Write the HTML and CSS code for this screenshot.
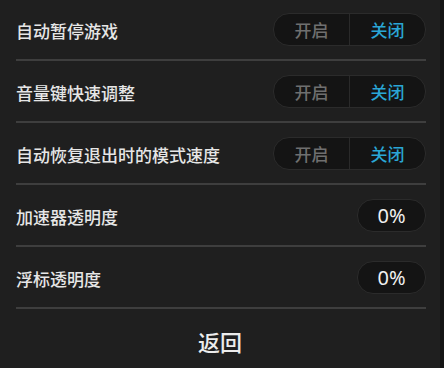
FILE: index.html
```html
<!DOCTYPE html>
<html>
<head>
<meta charset="utf-8">
<link rel="stylesheet" href="styles.css">
</head>
<body>
<div class="page">
  <div class="list">
    <div class="row first">
      <span class="label">自动暂停游戏</span>
      <div class="toggle"><span class="opt">开启</span><span class="opt on">关闭</span></div>
    </div>
    <div class="row">
      <span class="label">音量键快速调整</span>
      <div class="toggle"><span class="opt">开启</span><span class="opt on">关闭</span></div>
    </div>
    <div class="row">
      <span class="label">自动恢复退出时的模式速度</span>
      <div class="toggle"><span class="opt">开启</span><span class="opt on">关闭</span></div>
    </div>
    <div class="row">
      <span class="label">加速器透明度</span>
      <div class="pill">0%</div>
    </div>
    <div class="row">
      <span class="label">浮标透明度</span>
      <div class="pill">0%</div>
    </div>
  </div>
  <div class="back">返回</div>
</div>
</body>
</html>
```
FILE: styles.css
```css
html, body {
  margin: 0;
  padding: 0;
  background: #1f1f1f;
}
.page {
  width: 440px;
  height: 368px;
  border-right: 4px solid #141414;
  background: #1f1f1f;
  font-family: "Noto Sans CJK SC", "Noto Sans", sans-serif;
  display: flex;
  flex-direction: column;
}
.list {
  padding: 0 14px 0 16px;
}
.row {
  height: 60px;
  border-bottom: 2px solid #3e3e3e;
  display: flex;
  align-items: center;
  justify-content: space-between;
}
.row.first {
  height: 59px;
}
.label {
  color: #e6e6e6;
  font-size: 17px;
  font-weight: 500;
  line-height: 20px;
  padding-top: 3px;
}
.toggle {
  width: 151px;
  height: 31px;
  border-radius: 16px;
  background: #141414;
  border: 1px solid #2b2b2b;
  display: flex;
  overflow: hidden;
}
.opt {
  flex: 1;
  display: flex;
  align-items: center;
  justify-content: center;
  font-size: 17px;
  font-weight: 500;
  color: #6f6f6f;
}
.opt.on {
  color: #2aa6d6;
  border-left: 1px solid #2a2a2a;
}
.pill {
  width: 67px;
  height: 31px;
  border-radius: 16px;
  background: #141414;
  border: 1px solid #2b2b2b;
  color: #f0f0f0;
  font-family: "Noto Sans", sans-serif;
  font-size: 20px;
  display: flex;
  align-items: center;
  justify-content: center;
}
.back {
  flex: 1;
  display: flex;
  align-items: center;
  justify-content: center;
  color: #ececec;
  font-size: 22px;
  font-weight: 500;
  padding-top: 4px;
}
```
